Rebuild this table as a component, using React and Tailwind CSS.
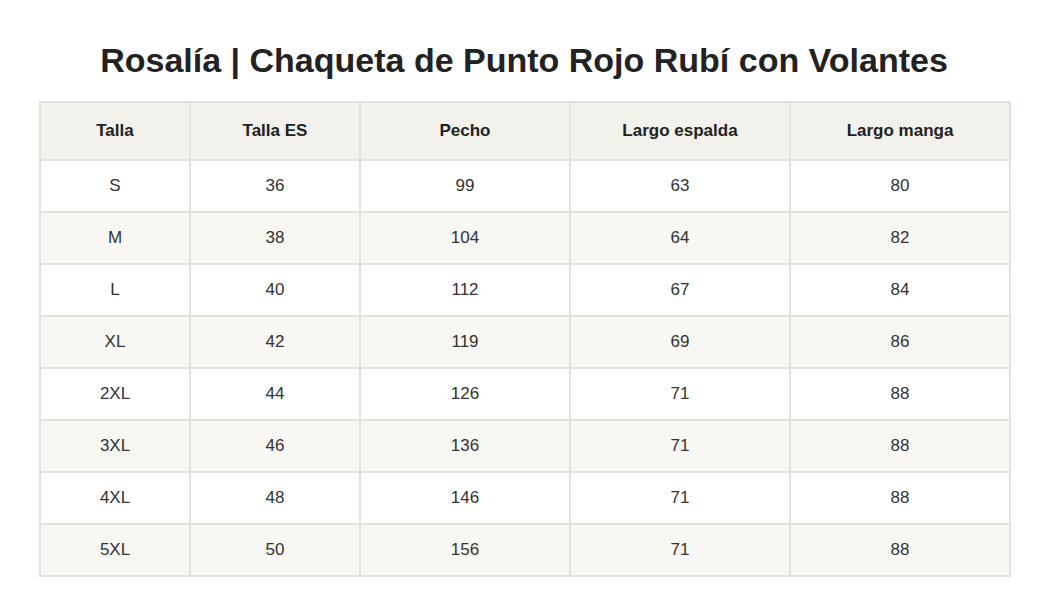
export default function App() {
    const rows = [
        ["S", "36", "99", "63", "80"],
        ["M", "38", "104", "64", "82"],
        ["L", "40", "112", "67", "84"],
        ["XL", "42", "119", "69", "86"],
        ["2XL", "44", "126", "71", "88"],
        ["3XL", "46", "136", "71", "88"],
        ["4XL", "48", "146", "71", "88"],
        ["5XL", "50", "156", "71", "88"],
    ];
    const heads = ["Talla", "Talla ES", "Pecho", "Largo espalda", "Largo manga"];
    const widths = ["w-[150px]", "w-[170px]", "w-[210px]", "w-[220px]", "w-[220px]"];

    return (
        <div className="min-h-screen bg-white font-['Liberation_Sans',Arial,sans-serif] pt-[38px] pl-[39px]">
            <h1 className="w-[970px] text-center text-[34px] leading-[44px] font-bold text-[#222]">
                Rosalía | Chaqueta de Punto Rojo Rubí con Volantes
            </h1>
            <table className="mt-[19px] w-[970px] table-fixed border-collapse">
                <thead>
                    <tr className="bg-[#f2f1ec] h-[58px]">
                        {heads.map((h, i) => (
                            <th key={h} className={`${widths[i]} border-2 border-[#e4e2dd] text-[17px] font-bold text-[#222]`}>
                                {h}
                            </th>
                        ))}
                    </tr>
                </thead>
                <tbody>
                    {rows.map((r, i) => (
                        <tr key={r[0]} className={`h-[52px] ${i % 2 ? "bg-[#f8f7f3]" : "bg-white"}`}>
                            {r.map((c, j) => (
                                <td key={j} className="border-2 border-[#e4e2dd] text-center text-[17px] text-[#333]">
                                    {c}
                                </td>
                            ))}
                        </tr>
                    ))}
                </tbody>
            </table>
        </div>
    );
}
